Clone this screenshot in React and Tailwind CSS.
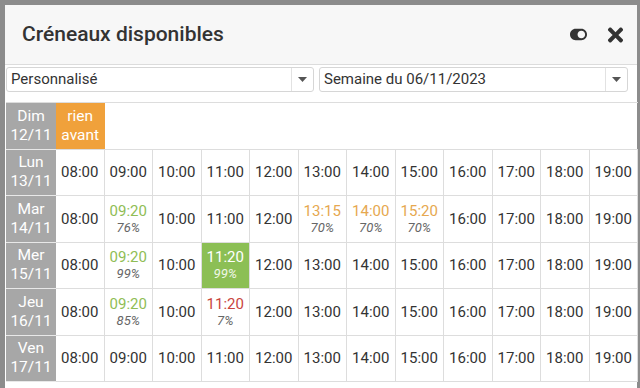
import React from "react";
import { FaToggleOn, FaTimes } from "react-icons/fa";

const hours = ["08:00","09:00","10:00","11:00","12:00","13:00","14:00","15:00","16:00","17:00","18:00","19:00"];

const special = {
  Mar: { 1: ["09:20", "76%", "g"], 5: ["13:15", "70%", "o"], 6: ["14:00", "70%", "o"], 7: ["15:20", "70%", "o"] },
  Mer: { 1: ["09:20", "99%", "g"], 3: ["11:20", "99%", "G"] },
  Jeu: { 1: ["09:20", "85%", "g"], 3: ["11:20", "7%", "r"] },
};

const days = [
  ["Lun", "13/11"],
  ["Mar", "14/11"],
  ["Mer", "15/11"],
  ["Jeu", "16/11"],
  ["Ven", "17/11"],
];

function DayCell({ d, n }) {
  return (
    <div className="bg-[#a7a7a7] text-white text-[15.5px] leading-[19px] flex flex-col items-center justify-center border-b border-[#e8e8e8]">
      <span>{d}</span>
      <span>{n}</span>
    </div>
  );
}

function Slot({ h, s }) {
  if (!s) {
    return (
      <div className="flex items-center justify-center text-[15px] text-[#333] border-r border-b border-[#dddddd]">
        {h}
      </div>
    );
  }
  const [t, p, c] = s;
  if (c === "G") {
    return (
      <div className="flex flex-col items-center justify-center bg-[#8cbf55] text-white border-r border-b border-[#dddddd]">
        <span className="text-[15px] leading-[17px]">{t}</span>
        <span className="text-[13px] italic leading-[15px] text-[#f0f7e8]">{p}</span>
      </div>
    );
  }
  const col = c === "g" ? "text-[#8fbd55]" : c === "o" ? "text-[#e6a84f]" : "text-[#c9453d]";
  return (
    <div className="flex flex-col items-center justify-center border-r border-b border-[#dddddd]">
      <span className={"text-[15px] leading-[17px] " + col}>{t}</span>
      <span className="text-[13px] italic leading-[15px] text-[#666]">{p}</span>
    </div>
  );
}

function Select({ label, w }) {
  return (
    <div className={"h-[25px] bg-white border border-[#d6d6d6] rounded-[3px] flex items-center " + w}>
      <span className="flex-1 pl-[4px] text-[15px] text-[#333]">{label}</span>
      <div className="w-[22px] h-full border-l border-[#e2e2e2] flex items-center justify-center">
        <svg width="9" height="5" viewBox="0 0 9 5"><path d="M0 0h9L4.5 5z" fill="#555" /></svg>
      </div>
    </div>
  );
}

export default function App() {
  return (
    <div className="w-[640px] h-[388px] bg-[#8c8c8c] overflow-hidden pt-[5px] pl-[5px]" style={{ fontFamily: "Roboto, 'Noto Sans', sans-serif" }}>
      <div className="w-[632px] h-[400px] bg-white">
        <div className="h-[60px] bg-[#f7f7f7] border-b border-[#dcdcdc] flex items-center pl-[17px] pr-[12px]">
          <span className="flex-1 text-[21px] font-medium text-[#333]">Créneaux disponibles</span>
          <FaToggleOn className="text-[#333] w-[17px] h-[17px] mr-[19px]" />
          <FaTimes className="text-[#333] w-[19px] h-[22px]" />
        </div>
        <div className="flex gap-[5px] pl-[1px] pt-[2px]">
          <Select label="Personnalisé" w="w-[308px]" />
          <Select label="Semaine du 06/11/2023" w="w-[309px]" />
        </div>
        <div className="mt-[10px] ml-[1px] w-[632px] grid grid-cols-[50px_repeat(12,1fr)] auto-rows-[46.5px] border-t border-[#dddddd]">
          <DayCell d="Dim" n="12/11" />
          <div className="bg-[#f0a13b] text-white text-[15.5px] leading-[19px] flex flex-col items-center justify-center border-b border-[#dddddd]">
            <span>rien</span>
            <span>avant</span>
          </div>
          <div className="col-span-11 border-b border-[#dddddd]" />
          {days.map(([d, n]) => (
            <React.Fragment key={d}>
              <DayCell d={d} n={n} />
              {hours.map((h, i) => (
                <Slot key={h} h={h} s={special[d] && special[d][i]} />
              ))}
            </React.Fragment>
          ))}
        </div>
      </div>
    </div>
  );
}
